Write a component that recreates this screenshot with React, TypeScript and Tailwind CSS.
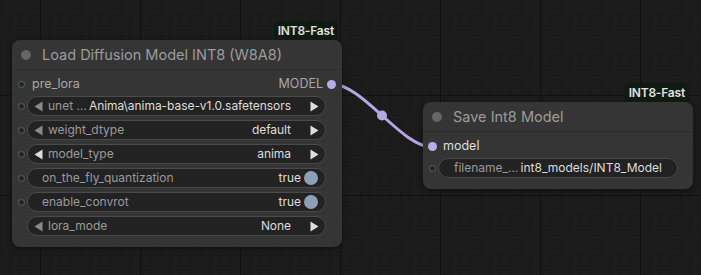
import React from 'react';

function InputDot({ connected, hidden }: { connected?: boolean; hidden?: boolean }) {
  if (hidden) return <span className="w-[7px] h-[7px] shrink-0" />;
  if (connected) return <span className="w-[9px] h-[9px] -ml-[1px] shrink-0 rounded-full bg-[#b9abe8]" />;
  return <span className="w-[7px] h-[7px] shrink-0 rounded-full border-[1.5px] border-[#4d6e4d] bg-[#242424]" />;
}

function Tri({ dir, light }: { dir: 'left' | 'right'; light?: boolean }) {
  return (
    <svg width="9" height="11" viewBox="0 0 9 11" className="shrink-0">
      <path d={dir === 'left' ? 'M8.5 0.5 L0.5 5.5 L8.5 10.5 Z' : 'M0.5 0.5 L8.5 5.5 L0.5 10.5 Z'} fill={light ? '#dedede' : '#8a8a8a'} />
    </svg>
  );
}

function Combo({ label, value, leftLight, dot = true }: { label: string; value: string; leftLight?: boolean; dot?: boolean }) {
  return (
    <div className="flex items-center h-[20px] pl-[6px]">
      <InputDot hidden={!dot} />
      <div className="ml-[2px] flex-1 h-[20px] rounded-full border border-[#4a4a4a] bg-[#222222] flex items-center pl-[6px] pr-[6px]">
        <Tri dir="left" light={leftLight} />
        <span className="ml-[5px] text-[#9a9a9a] whitespace-nowrap">{label}</span>
        <span className="ml-auto mr-[19px] text-[#dddddd] whitespace-nowrap tracking-[-0.05px]">{value}</span>
        <Tri dir="right" light />
      </div>
    </div>
  );
}

function Toggle({ label }: { label: string }) {
  return (
    <div className="flex items-center h-[20px] pl-[6px]">
      <InputDot />
      <div className="ml-[2px] flex-1 h-[20px] rounded-full border border-[#4a4a4a] bg-[#222222] flex items-center pl-[14px] pr-[7px]">
        <span className="text-[#9a9a9a]">{label}</span>
        <span className="ml-auto mr-[3px] text-[#dddddd]">true</span>
        <span className="w-[14px] h-[14px] rounded-full bg-[#8c9fb6]" />
      </div>
    </div>
  );
}

function Badge() {
  return (
    <div className="absolute bottom-full right-[4px] h-[19px] px-[4px] flex items-center bg-[#0f1b10] rounded-t-sm text-[12px] font-semibold text-[#e2e2e2] tracking-[-0.2px]">
      INT8-Fast
    </div>
  );
}

function Title({ text }: { text: string }) {
  return (
    <div className="h-[30px] flex items-center border-b border-[#2d2d2d]">
      <span className="ml-[9px] w-[10px] h-[10px] rounded-full bg-[#666666]" />
      <span className="ml-[11px] text-[14.5px] text-[#9c9c9c]">{text}</span>
    </div>
  );
}

export default function App() {
  return (
    <div className="relative w-[701px] h-[275px] overflow-hidden font-[Inter,'Liberation_Sans',sans-serif] text-[12px] bg-[#1c1c1c] bg-[linear-gradient(to_right,#111111_1px,transparent_1px),linear-gradient(to_bottom,#111111_1px,transparent_1px),linear-gradient(to_right,#191919_1px,transparent_1px),linear-gradient(to_bottom,#191919_1px,transparent_1px)] bg-[size:100px_100px,100px_100px,10px_10px,10px_10px] bg-[position:40px_95px]">
      <svg className="absolute inset-0 pointer-events-none" width="701" height="275">
        <path d="M332 84 C362 84, 402 147, 432 147" stroke="#b5a7e2" strokeWidth="3" fill="none" />
        <circle cx="382" cy="115.5" r="5" fill="#b5a7e2" />
      </svg>

      {/* Load Diffusion Model INT8 */}
      <div className="absolute left-[12px] top-[40px] w-[330px] h-[207px] rounded-lg bg-[#353535] shadow-[0_2px_6px_rgba(0,0,0,0.4)]">
        <Badge />
        <Title text="Load Diffusion Model INT8 (W8A8)" />
        <div className="pt-[1px] pr-[16px]">
          <div className="h-[25px] flex items-center pl-[6px] -mr-[16px] pr-[6px] pt-[1px]">
            <InputDot />
            <span className="ml-[7px] text-[12.5px] text-[#a8a8a8]">pre_lora</span>
            <span className="ml-auto mr-[5px] text-[12.5px] text-[#a8a8a8]">MODEL</span>
            <InputDot connected />
          </div>
          <div className="flex flex-col gap-[4px]">
            <Combo label="unet …" value="Anima\anima-base-v1.0.safetensors" />
            <Combo label="weight_dtype" value="default" />
            <Combo label="model_type" value="anima" leftLight />
            <Toggle label="on_the_fly_quantization" />
            <Toggle label="enable_convrot" />
            <Combo label="lora_mode" value="None" dot={false} />
          </div>
        </div>
      </div>

      {/* Save Int8 Model */}
      <div className="absolute left-[423px] top-[102px] w-[270px] h-[87px] rounded-lg bg-[#353535] shadow-[0_2px_6px_rgba(0,0,0,0.4)]">
        <Badge />
        <Title text="Save Int8 Model" />
        <div className="pt-[1px]">
          <div className="h-[25px] flex items-center pl-[6px] pt-[2px]">
            <InputDot connected />
            <span className="ml-[6px] text-[12.5px] text-[#dddddd]">model</span>
          </div>
          <div className="flex items-center h-[20px] pl-[6px] pr-[15px]">
            <InputDot />
            <div className="ml-[2px] flex-1 h-[20px] rounded-full border border-[#4a4a4a] bg-[#222222] flex items-center pl-[15px] pr-[15px]">
              <span className="text-[#9a9a9a]">filename_…</span>
              <span className="ml-auto text-[#dddddd]">int8_models/INT8_Model</span>
            </div>
          </div>
        </div>
      </div>
    </div>
  );
}
